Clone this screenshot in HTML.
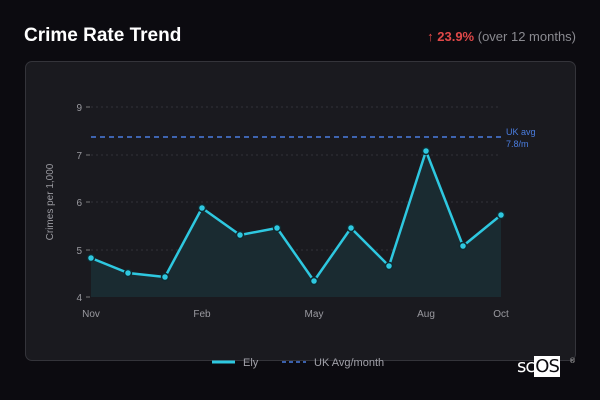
<!DOCTYPE html>
<html><head><style>
body{margin:0;width:600px;height:400px;background:#0c0b10;font-family:"Liberation Sans","DejaVu Sans",sans-serif;overflow:hidden;position:relative}
.t{position:absolute;left:24px;top:25px;color:#fff;font-weight:bold;font-size:19px}
.r{position:absolute;right:24px;top:29px;font-size:13px;color:#8a8a90}
.r b{color:#e04848}
.card{position:absolute;left:25px;top:61px;width:549px;height:298px;background:#1a1a1f;border:1px solid #34343a;border-radius:7px}
svg{position:absolute;left:0;top:0}
.logo{position:absolute;left:517px;top:357px;font-size:18px;line-height:20px;color:#fff;font-family:"DejaVu Sans",sans-serif;letter-spacing:-1px}
.logo span{background:#fff;color:#0c0b10;padding:0 1px}
.logo i{position:absolute;left:52px;top:-6px;font-size:7px;font-style:normal;color:#bbb}
</style></head><body>
<div class="t">Crime Rate Trend</div>
<div class="r"><b>↑ 23.9%</b> (over 12 months)</div>
<div class="card"></div>
<svg width="600" height="400" font-family="Liberation Sans, DejaVu Sans, sans-serif">
<g stroke="#333338" stroke-dasharray="2,3" stroke-width="1">
<line x1="91" y1="107" x2="501" y2="107"/><line x1="91" y1="155" x2="501" y2="155"/><line x1="91" y1="202" x2="501" y2="202"/><line x1="91" y1="250" x2="501" y2="250"/>
</g>
<g stroke="#777" stroke-width="1"><line x1="86" y1="107" x2="90" y2="107"/><line x1="86" y1="155" x2="90" y2="155"/><line x1="86" y1="202" x2="90" y2="202"/><line x1="86" y1="250" x2="90" y2="250"/><line x1="86" y1="297" x2="90" y2="297"/></g>
<g fill="#9a9aa0" font-size="10" text-anchor="end"><text x="82" y="111">9</text><text x="82" y="159">7</text><text x="82" y="206">6</text><text x="82" y="254">5</text><text x="82" y="301">4</text></g>
<text transform="translate(53,202) rotate(-90)" fill="#9a9aa0" font-size="10" text-anchor="middle">Crimes per 1,000</text>
<g fill="#9a9aa0" font-size="10" text-anchor="middle"><text x="91" y="317">Nov</text><text x="202" y="317">Feb</text><text x="314" y="317">May</text><text x="426" y="317">Aug</text><text x="501" y="317">Oct</text></g>
<polygon fill="#1a2b31" points="91,258 128,273 165,277 202,208 240,235 277,228 314,281 351,228 389,266 426,151 463,246 501,215 501,297 91,297"/>
<line x1="91" y1="137" x2="501" y2="137" stroke="#4a7de0" stroke-width="1.5" stroke-dasharray="5,4"/>
<text x="506" y="135" fill="#4a7de0" font-size="9">UK avg</text><text x="506" y="147" fill="#4a7de0" font-size="9">7.8/m</text>
<polyline fill="none" stroke="#2ec8e0" stroke-width="2.5" stroke-linejoin="round" points="91,258 128,273 165,277 202,208 240,235 277,228 314,281 351,228 389,266 426,151 463,246 501,215"/>
<g fill="#2ec8e0" stroke="#0f2a30" stroke-width="1.5">
<circle cx="91" cy="258" r="3.5"/><circle cx="128" cy="273" r="3.5"/><circle cx="165" cy="277" r="3.5"/><circle cx="202" cy="208" r="3.5"/><circle cx="240" cy="235" r="3.5"/><circle cx="277" cy="228" r="3.5"/><circle cx="314" cy="281" r="3.5"/><circle cx="351" cy="228" r="3.5"/><circle cx="389" cy="266" r="3.5"/><circle cx="426" cy="151" r="3.5"/><circle cx="463" cy="246" r="3.5"/><circle cx="501" cy="215" r="3.5"/>
</g>
<line x1="212" y1="362" x2="235" y2="362" stroke="#2ec8e0" stroke-width="3"/>
<text x="243" y="366" fill="#a0a0a8" font-size="11">Ely</text>
<line x1="282" y1="362" x2="306" y2="362" stroke="#4a7de0" stroke-width="1.5" stroke-dasharray="4,3"/>
<text x="314" y="366" fill="#a0a0a8" font-size="11">UK Avg/month</text>
</svg>
<div class="logo">sc<span>OS</span><i>®</i></div>
</body></html>
